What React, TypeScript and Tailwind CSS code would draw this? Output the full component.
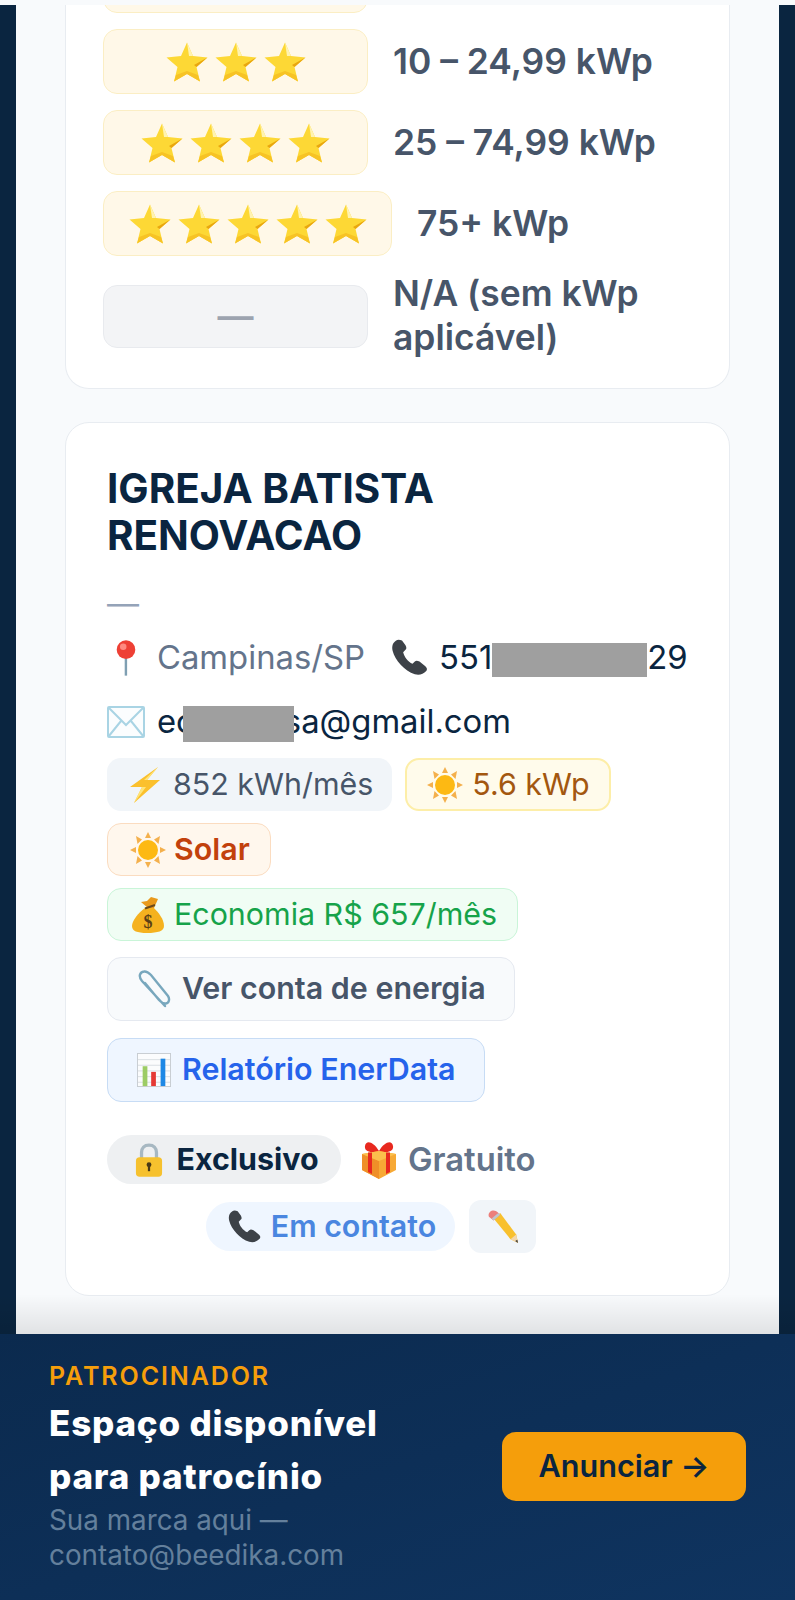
import type { ReactNode } from "react";

/* ---------------- EMOJI DRAWINGS ---------------- */

function Star({ className }: { className: string }) {
  return (
    <svg viewBox="0 0 42 40" className={className}>
      <path d="M21 0.5 L27 14 L41.5 15.5 L30.5 25 L34 39.5 L21 32 L8 39.5 L11.5 25 L0.5 15.5 L15 14 Z" fill="#fdd835" />
      <path d="M21 0.5 L23 14 L27 14 Z" fill="#fff3b0" />
      <path d="M41.5 15.5 L30.5 25 L28 23 Z" fill="#e9a60f" />
      <path d="M34 39.5 L21 32 L8 39.5 L10 33 L21 29 L32 33 Z" fill="#f7c325" />
    </svg>
  );
}

function Pin() {
  return (
    <svg viewBox="0 0 28 38" className="h-[36px] w-[26px] shrink-0">
      <rect x="12.6" y="18" width="2.6" height="20" fill="#7f9fb2" />
      <circle cx="14" cy="10" r="10" fill="#ee4035" />
      <circle cx="11" cy="7" r="3.5" fill="#ff8a80" />
    </svg>
  );
}

function Phone({ className }: { className: string }) {
  return (
    <svg viewBox="0 0 36 36" className={className}>
      <path
        d="M7 3 C4 5 3 8 4 12 C6 20 14 29 23 32 C27 33 30 32 33 29 C34 27 33 26 32 25 L27 21 C25 20 24 20 23 21 L21 23 C17 21 14 17 13 13 L15 11 C16 10 16 9 15 7 L12 3 C10 2 8 2 7 3 Z"
        fill="#3d4248"
      />
    </svg>
  );
}

function Envelope() {
  return (
    <svg viewBox="0 0 38 32" className="h-[32px] w-[38px] shrink-0" fill="none" stroke="#a9d4e4" strokeWidth="2">
      <rect x="1" y="1" width="36" height="30" rx="1" fill="#fbfdfe" />
      <path d="M1.5 1.5 L19 19 L36.5 1.5 M1.5 30.5 L14 15 M36.5 30.5 L24 15" />
    </svg>
  );
}

function Bolt() {
  return (
    <svg viewBox="0 0 30 36" className="h-[36px] w-[30px] shrink-0">
      <path d="M28 0 L0 20 L12 20 L4 36 L30 13 L17 13 Z" fill="#fbc02d" />
      <path d="M28 0 L14 13 L17 13 Z M12 20 L16 20 L4 36 Z" fill="#ffe57a" />
    </svg>
  );
}

function Sun() {
  return (
    <svg viewBox="0 0 36 36" className="h-[36px] w-[36px] shrink-0">
      <g fill="#f4b04c">
        <path d="M18 0 L21 6 L15 6 Z" />
        <path d="M18 36 L15 30 L21 30 Z" />
        <path d="M0 18 L6 15 L6 21 Z" />
        <path d="M36 18 L30 21 L30 15 Z" />
        <path d="M6 4 L12 7.5 L7.5 12 Z" />
        <path d="M30 4 L28.5 12 L24 7.5 Z" />
        <path d="M6 32 L7.5 24 L12 28.5 Z" />
        <path d="M30 32 L24 28.5 L28.5 24 Z" />
      </g>
      <circle cx="18" cy="18" r="10" fill="#fdb913" />
    </svg>
  );
}

function MoneyBag() {
  return (
    <svg viewBox="0 0 32 36" className="h-[36px] w-[32px] shrink-0">
      <path d="M16 11 L9 5 L15 4 L19 0 L26 2 L22 11 Z" fill="#e99a1c" />
      <path d="M13 11 C6 16 0 24 0 29 C0 34 5 36 15 36 C26 36 32 34 32 29 C32 22 26 15 22 11 Z" fill="#f5b21f" />
      <path d="M13 11.5 L23 8" stroke="#6b4a1c" strokeWidth="2" />
      <text x="16" y="31" textAnchor="middle" fontSize="18" fontWeight="700" fill="#5b4016" fontFamily="Liberation Serif, serif">$</text>
    </svg>
  );
}

function Clip() {
  return (
    <svg viewBox="0 0 36 38" className="h-[38px] w-[36px] shrink-0" fill="none" stroke="#78a7bd" strokeWidth="2.4" strokeLinecap="round">
      <path d="M30 36 L7 11 C3 6 5 2 9 1.5 C12 1 14 3 16 5 L33 26 C35 29 34 33 31 33.5 C28 34 26 32 24 30 L10 13" />
    </svg>
  );
}

function Chart() {
  return (
    <svg viewBox="0 0 36 36" className="h-[34px] w-[34px] shrink-0">
      <rect x="0.5" y="0.5" width="35" height="35" fill="#fbfcfd" stroke="#c6ccd1" />
      <path d="M1 7 H35 M1 13 H35 M1 19 H35 M1 25 H35 M1 31 H35" stroke="#d9dee2" strokeWidth="1" />
      <rect x="6" y="14" width="5" height="21" fill="#9ccc65" />
      <rect x="15" y="20" width="5" height="15" fill="#e53935" />
      <rect x="25" y="6" width="5" height="29" fill="#1e88e5" />
    </svg>
  );
}

function Lock() {
  return (
    <svg viewBox="0 0 30 36" className="h-[36px] w-[28px] shrink-0">
      <path d="M7 17 V10 C7 5 10 2 15 2 C20 2 23 5 23 10 V17" fill="none" stroke="#a7b8c2" strokeWidth="3.5" />
      <rect x="1" y="15" width="28" height="21" rx="4" fill="#f6c12e" />
      <circle cx="15" cy="23" r="2.6" fill="#4a3a17" />
      <rect x="13.8" y="23" width="2.4" height="7" fill="#4a3a17" />
    </svg>
  );
}

function Gift() {
  return (
    <svg viewBox="0 0 36 38" className="h-[38px] w-[36px] shrink-0">
      <path d="M18 10 C12 0 5 -1 4 5 C3 11 10 12 18 11 C26 12 33 11 32 5 C31 -1 24 0 18 10 Z" fill="#e8291f" />
      <path d="M1 13 L18 10 L35 13 V29 L18 38 L1 29 Z" fill="#f7a935" />
      <path d="M1 13 L18 20 V38 L1 29 Z" fill="#ef8f28" />
      <path d="M1 13 L18 10 L35 13 L18 20 Z" fill="#fbc04c" />
      <path d="M7 11.5 H11 V33 L7 31 Z M25 11.5 H29 V31 L25 33 Z" fill="#e8291f" />
    </svg>
  );
}

function Pencil() {
  return (
    <svg viewBox="0 0 34 36" className="h-[34px] w-[32px] shrink-0">
      <path d="M7 9 L14 3 L31 26 L33 35 L25 31 Z" fill="#f8c02e" />
      <path d="M25 31 L33 35 L31 26 Z" fill="#f2d6ab" />
      <path d="M30 33 L33 35 L32.2 31.5 Z" fill="#3a3a3a" />
      <path d="M2 7 C1 4 3 1 6 0.5 C8 0 10 1 11 2 L14 5 L7 11 Z" fill="#ec7f7b" />
      <path d="M5 9 L12 3 L14 5 L7 11 Z" fill="#bfc6cb" />
    </svg>
  );
}

/* ---------------- SMALL PIECES ---------------- */

function StarRow({ stars, label, wide }: { stars: number; label: string; wide?: boolean }) {
  return (
    <div className="flex items-center gap-[25px]">
      <div
        className={`flex h-[65px] shrink-0 items-center justify-center gap-[7px] rounded-[14px] border border-[#fbeec4] bg-[#fff8e8] ${
          wide ? "w-[289px]" : "w-[265px]"
        }`}
      >
        {Array.from({ length: stars }).map((_, i) => (
          <Star key={i} className="h-[40px] w-[42px]" />
        ))}
      </div>
      <span className="text-[35.4px] leading-[44px] font-semibold text-[#475569]">{label}</span>
    </div>
  );
}

function Chip({ className, children }: { className: string; children: ReactNode }) {
  return <div className={`flex w-fit items-center rounded-[14px] ${className}`}>{children}</div>;
}

/* ---------------- PAGE ---------------- */

export default function App() {
  return (
    <div className="flex h-[1600px] w-[795px] flex-col overflow-hidden bg-[#0a2540] [font-family:Inter,sans-serif]">
      <div className="h-[5px] shrink-0 bg-[#f8fafc]" />

      <main className="relative min-h-0 flex-1 px-4">
        <div className="flex h-full flex-col gap-[33px] overflow-hidden bg-[#f8fafc] px-[49px]">
          {/* rating legend, scrolled past its top */}
          <section className="shrink-0 overflow-hidden rounded-b-[24px] border-x border-b border-[#e8ecf1] bg-white px-[37px] pb-[28px]">
            <div className="flex flex-col gap-[16px]">
              <div className="-mt-[57px] h-[65px] w-[265px] rounded-[14px] border border-[#fbeec4] bg-[#fff8e8]" />
              <StarRow stars={3} label="10 – 24,99 kWp" />
              <StarRow stars={4} label="25 – 74,99 kWp" />
              <StarRow stars={5} label="75+ kWp" wide />
              <div className="flex items-center gap-[25px]">
                <div className="flex h-[63px] w-[265px] shrink-0 items-center justify-center rounded-[14px] border border-[#e8eaee] bg-[#f3f4f6]">
                  <span className="text-[36px] leading-none font-semibold text-[#9ca3af]">—</span>
                </div>
                <span className="text-[35.4px] leading-[44px] font-semibold text-[#475569]">
                  N/A (sem kWp aplicável)
                </span>
              </div>
            </div>
          </section>

          {/* lead card */}
          <section className="shrink-0 rounded-[24px] border border-[#e8ecf1] bg-white px-[41px] pt-[42px] pb-[42px]">
            <h2 className="text-[40.4px] leading-[47px] font-bold text-[#0a2540]">
              IGREJA BATISTA
              <br />
              RENOVACAO
            </h2>
            <p className="mt-[23px] text-[32px] leading-[44px] text-[#94a3b8]">—</p>

            <div className="mt-[12px] flex h-[40px] items-center">
              <span className="ml-[6px] flex"><Pin /></span>
              <span className="ml-[18px] text-[32.8px] text-[#64748b]">Campinas/SP</span>
              <span className="ml-[23px]"><Phone className="h-[42px] w-[42px]" /></span>
              <span className="ml-[9px] whitespace-nowrap text-[32.8px] text-[#0a2540]">
                551
                <span className="inline-block h-[34px] w-[155px] bg-[#9f9f9f] align-middle" />
                29
              </span>
            </div>

            <div className="mt-[24px] flex h-[40px] items-center">
              <Envelope />
              <span className="ml-[12px] whitespace-nowrap text-[32.8px] text-[#0a2540]">
                ec
                <span className="relative -mr-[10px] -ml-[12px] inline-block h-[36px] w-[111px] bg-[#9f9f9f] align-middle" />
                sa@gmail.com
              </span>
            </div>

            <div className="mt-[16px] flex gap-[13px]">
              <Chip className="h-[53px] gap-[13px] bg-[#f1f5f9] pr-[19px] pl-[23px] text-[30.4px] text-[#475569]">
                <Bolt />
                852 kWh/mês
              </Chip>
              <Chip className="h-[53px] gap-[9px] border-2 border-[#fdeea8] bg-[#fffbeb] pr-[19px] pl-[20px] text-[30.4px] text-[#a3570f]">
                <Sun />
                5.6 kWp
              </Chip>
            </div>

            <Chip className="mt-[12px] h-[53px] gap-[8px] border border-[#fbdcc0] bg-[#fff7ed] pr-[20px] pl-[22px] text-[30.4px] font-semibold text-[#c2410c]">
              <Sun />
              Solar
            </Chip>

            <Chip className="mt-[12px] h-[53px] gap-[10px] border border-[#c9f5d8] bg-[#f0fdf4] pr-[20px] pl-[24px] text-[30.4px] text-[#16a34a]">
              <MoneyBag />
              Economia R$ 657/mês
            </Chip>

            <Chip className="mt-[16px] h-[64px] gap-[11px] border border-[#e5e9f0] bg-[#f8fafc] pr-[28px] pl-[27px] text-[30.4px] font-semibold text-[#475569]">
              <Clip />
              Ver conta de energia
            </Chip>

            <Chip className="mt-[17px] h-[64px] gap-[11px] border border-[#c7dcf5] bg-[#eff6ff] px-[29px] text-[30.4px] font-semibold text-[#2563eb]">
              <Chart />
              Relatório EnerData
            </Chip>

            <div className="mt-[33px] flex items-center gap-[20px]">
              <div className="flex h-[49px] w-[234px] items-center justify-center gap-[13px] rounded-full bg-[#eef0f2] pl-[6px] text-[30.4px] font-bold text-[#0a2540]">
                <Lock />
                Exclusivo
              </div>
              <div className="flex items-center gap-[11px] text-[32.8px] font-semibold text-[#64748b]">
                <Gift />
                Gratuito
              </div>
            </div>

            <div className="mt-[16px] ml-[99px] flex items-center gap-[14px]">
              <div className="flex h-[49px] w-[249px] items-center justify-center gap-[8px] rounded-full bg-[#eff6ff] text-[30.4px] font-semibold text-[#4a86e0]">
                <Phone className="h-[38px] w-[38px]" />
                Em contato
              </div>
              <button className="flex h-[53px] w-[67px] items-center justify-center rounded-[12px] bg-[#f1f5f9]">
                <Pencil />
              </button>
            </div>
          </section>
        </div>

        {/* shade cast by the sponsor bar */}
        <div className="pointer-events-none absolute inset-x-0 bottom-0 h-[40px] bg-gradient-to-b from-transparent to-[#00000018]" />
      </main>

      {/* sponsor bar */}
      <aside className="flex h-[266px] shrink-0 items-center justify-between bg-gradient-to-br from-[#0b2a4e] to-[#0f3460] px-[49px]">
        <div className="w-[340px]">
          <p className="text-[25px] leading-[30px] font-semibold tracking-[1.9px] text-[#f59e0b]">PATROCINADOR</p>
          <p className="mt-[6px] text-[35px] leading-[53px] font-extrabold tracking-[0.8px] text-white">Espaço disponível para patrocínio</p>
          <p className="text-[27.8px] leading-[35px] text-[#64809c]">Sua marca aqui — contato@beedika.com</p>
        </div>
        <button className="mt-[-2px] flex h-[69px] w-[244px] items-center justify-center rounded-[14px] bg-[#f59e0b] text-[30.6px] font-semibold text-[#0a2540]">
          Anunciar →
        </button>
      </aside>
    </div>
  );
}
